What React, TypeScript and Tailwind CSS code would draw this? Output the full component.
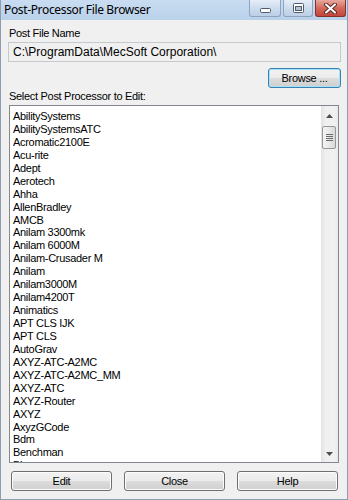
const posts = [
  'AbilitySystems',
  'AbilitySystemsATC',
  'Acromatic2100E',
  'Acu-rite',
  'Adept',
  'Aerotech',
  'Ahha',
  'AllenBradley',
  'AMCB',
  'Anilam 3300mk',
  'Anilam 6000M',
  'Anilam-Crusader M',
  'Anilam',
  'Anilam3000M',
  'Anilam4200T',
  'Animatics',
  'APT CLS IJK',
  'APT CLS',
  'AutoGrav',
  'AXYZ-ATC-A2MC',
  'AXYZ-ATC-A2MC_MM',
  'AXYZ-ATC',
  'AXYZ-Router',
  'AXYZ',
  'AxyzGCode',
  'Bdm',
  'Benchman',
  'Biesse',
]

function WinButton({ label, focused }: { label: string; focused?: boolean }) {
  return (
    <button
      className={
        'h-[20px] rounded-[3px] border leading-[18px] text-center bg-[linear-gradient(#f2f2f2_0%,#ebebeb_50%,#dddddd_50%,#cfcfcf_100%)] ' +
        (focused
          ? 'border-[#3c7fb1] shadow-[inset_0_0_0_1px_#9fe4fb]'
          : 'border-[#707070] shadow-[inset_0_0_0_1px_#fcfcfc]')
      }
    >
      {label}
    </button>
  )
}

export default function App() {
  return (
    <div className="w-[348px] h-[500px] bg-[#f0f0f0] border-x border-b border-[#8e9db1] flex flex-col overflow-hidden text-[11px] tracking-[-0.3px] text-black font-['Liberation_Sans',Arial,sans-serif]">
      {/* Title bar */}
      <div className="h-[20px] flex items-start bg-[linear-gradient(#c9dcf1,#b9d1ea)]">
        <span className="pl-[3px] pt-[2px] leading-[16px] text-[12px] tracking-[-0.35px] font-['Noto_Sans',sans-serif]">
          Post-Processor File Browser
        </span>
        <div className="ml-auto mr-[1px] flex gap-[2px]">
          <div className="w-[32px] h-[17px] rounded-b-[3px] border border-t-0 border-[#8ea3c0] bg-[linear-gradient(#e6eef8,#cddcee_50%,#bccfe7)] flex items-center justify-center pt-[4px]">
            <svg width="11" height="5" viewBox="0 0 11 5">
              <rect x="0.5" y="0.5" width="10" height="4" rx="1" fill="#ffffff" stroke="#4f5b6b" />
            </svg>
          </div>
          <div className="w-[30px] h-[17px] rounded-b-[3px] border border-t-0 border-[#8ea3c0] bg-[linear-gradient(#e6eef8,#cddcee_50%,#bccfe7)] flex items-center justify-center">
            <svg width="11" height="10" viewBox="0 0 11 10">
              <rect x="0.5" y="0.5" width="10" height="9" rx="1" fill="#ffffff" stroke="#4f5b6b" />
              <rect x="2.5" y="3.5" width="6" height="4" fill="#b4c3d6" stroke="#4f5b6b" />
            </svg>
          </div>
          <div className="w-[31px] h-[17px] rounded-b-[3px] border border-t-0 border-[#83322b] bg-[linear-gradient(#e8a89d,#d4695b_50%,#c2453a)] flex items-center justify-center">
            <svg width="13" height="11" viewBox="0 0 13 11">
              <path d="M2 1.5 L11 9.5 M11 1.5 L2 9.5" stroke="#5a2a28" strokeWidth="4" strokeLinecap="round" />
              <path d="M2 1.5 L11 9.5 M11 1.5 L2 9.5" stroke="#ffffff" strokeWidth="2" strokeLinecap="round" />
            </svg>
          </div>
        </div>
      </div>

      {/* Body */}
      <div className="flex flex-col pl-[7px] pr-[6px]">
        <div className="pt-[7px] pl-[1px] leading-[13px]">Post File Name</div>
        <div className="mt-[2px] h-[20px] border border-[#c5c8cc] bg-[#f0f0f0] flex items-center pl-[4px] text-[12px] tracking-normal">
          C:\ProgramData\MecSoft Corporation\
        </div>
        <div className="mt-[6px] self-end w-[73px] flex flex-col">
          <WinButton label="Browse ..." focused />
        </div>
        <div className="mt-[2px] pl-[1px] leading-[13px]">Select Post Processor to Edit:</div>

        {/* List box */}
        <div className="mt-[2px] ml-[1px] mr-[2px] h-[358px] border border-[#828790] bg-white flex">
          <div className="flex-1 pt-[4px] pl-[3px] overflow-hidden">
            {posts.map((p) => (
              <div key={p} className="h-[12.95px] leading-[13px] whitespace-nowrap">
                {p}
              </div>
            ))}
          </div>
          <div className="w-[17px] flex flex-col bg-[linear-gradient(90deg,#e2e2e2,#efefef_25%,#f1f1f1_75%,#e9e9e9)]">
            <div className="h-[20px] flex items-center justify-center">
              <svg width="7" height="4" viewBox="0 0 7 4">
                <path d="M3.5 0 L7 4 L0 4 Z" fill="#4e4e4e" />
              </svg>
            </div>
            <div className="mx-[1px] mr-[2px] h-[23px] rounded-[2px] border border-[#979797] bg-[linear-gradient(90deg,#f4f4f4,#e9e9e9_50%,#d8d8d8)] flex flex-col items-center justify-center gap-[1px]">
              <div className="w-[7px] h-[1px] bg-[#6b6b6b]" />
              <div className="w-[7px] h-[1px] bg-[#6b6b6b]" />
              <div className="w-[7px] h-[1px] bg-[#6b6b6b]" />
              <div className="w-[7px] h-[1px] bg-[#6b6b6b]" />
            </div>
            <div className="flex-1" />
            <div className="h-[17px] flex items-center justify-center">
              <svg width="7" height="4" viewBox="0 0 7 4">
                <path d="M0 0 L7 0 L3.5 4 Z" fill="#4e4e4e" />
              </svg>
            </div>
          </div>
        </div>

        {/* Bottom buttons */}
        <div className="mt-[8px] mx-[3px] grid grid-cols-3 gap-[12px]">
          <WinButton label="Edit" />
          <WinButton label="Close" />
          <WinButton label="Help" />
        </div>
      </div>
    </div>
  )
}
